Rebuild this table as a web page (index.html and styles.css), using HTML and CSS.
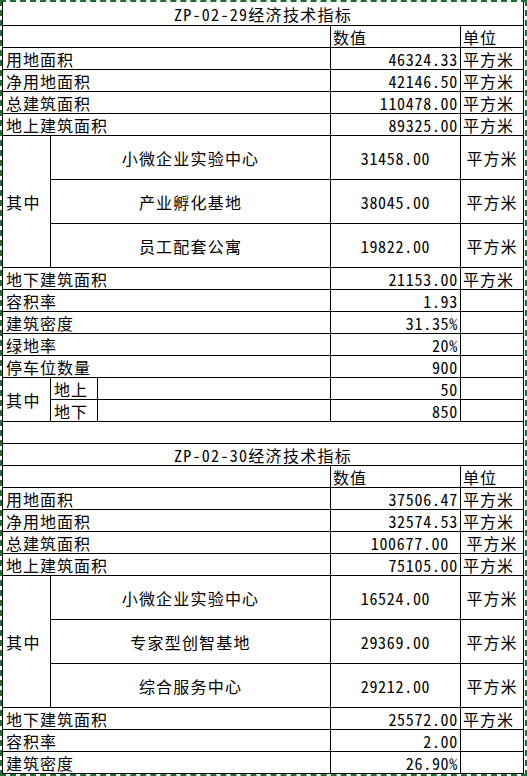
FILE: index.html
```html
<!DOCTYPE html>
<html lang="zh-CN">
<head>
<meta charset="utf-8">
<title>经济技术指标</title>
<link rel="stylesheet" href="styles.css">
</head>
<body>
<div class="sheet">
  <div class="grid">
    <div class="c title">ZP-02-29经济技术指标</div>
    <div class="c span3"></div><div class="c unit">数值</div><div class="c unit">单位</div>
    <div class="c label">用地面积</div><div class="c num">46324.33</div><div class="c unit">平方米</div>
    <div class="c label">净用地面积</div><div class="c num">42146.50</div><div class="c unit">平方米</div>
    <div class="c label">总建筑面积</div><div class="c num">110478.00</div><div class="c unit">平方米</div>
    <div class="c label">地上建筑面积</div><div class="c num">89325.00</div><div class="c unit">平方米</div>
    <div class="c group3">其中</div>
    <div class="c sub">小微企业实验中心</div><div class="c ctr numf">31458.00</div><div class="c ctr">平方米</div>
    <div class="c sub">产业孵化基地</div><div class="c ctr numf">38045.00</div><div class="c ctr">平方米</div>
    <div class="c sub">员工配套公寓</div><div class="c ctr numf">19822.00</div><div class="c ctr">平方米</div>
    <div class="c label">地下建筑面积</div><div class="c num">21153.00</div><div class="c unit">平方米</div>
    <div class="c label">容积率</div><div class="c num">1.93</div><div class="c"></div>
    <div class="c label">建筑密度</div><div class="c num">31.35%</div><div class="c"></div>
    <div class="c label">绿地率</div><div class="c num">20%</div><div class="c"></div>
    <div class="c label">停车位数量</div><div class="c num">900</div><div class="c"></div>
    <div class="c group2">其中</div>
    <div class="c small">地上</div><div class="c"></div><div class="c num">50</div><div class="c"></div>
    <div class="c small">地下</div><div class="c"></div><div class="c num">850</div><div class="c"></div>
    <div class="c full"></div>

    <div class="c title">ZP-02-30经济技术指标</div>
    <div class="c span3"></div><div class="c unit">数值</div><div class="c unit">单位</div>
    <div class="c label">用地面积</div><div class="c num">37506.47</div><div class="c unit">平方米</div>
    <div class="c label">净用地面积</div><div class="c num">32574.53</div><div class="c unit">平方米</div>
    <div class="c label">总建筑面积</div><div class="c num shifted">100677.00</div><div class="c ctr">平方米</div>
    <div class="c label">地上建筑面积</div><div class="c num">75105.00</div><div class="c unit">平方米</div>
    <div class="c group3">其中</div>
    <div class="c sub">小微企业实验中心</div><div class="c ctr numf">16524.00</div><div class="c ctr">平方米</div>
    <div class="c sub">专家型创智基地</div><div class="c ctr numf">29369.00</div><div class="c ctr">平方米</div>
    <div class="c sub">综合服务中心</div><div class="c ctr numf">29212.00</div><div class="c ctr">平方米</div>
    <div class="c label">地下建筑面积</div><div class="c num">25572.00</div><div class="c unit">平方米</div>
    <div class="c label">容积率</div><div class="c num">2.00</div><div class="c"></div>
    <div class="c label">建筑密度</div><div class="c num">26.90%</div><div class="c"></div>
  </div>
</div>
</body>
</html>
```

FILE: styles.css
```css
html, body {
  margin: 0;
  padding: 0;
  background: #fff;
}

body {
  font-family: "Noto Sans Mono CJK SC", "Noto Sans CJK SC", "DejaVu Sans Mono", monospace;
  font-size: 16px;
  color: #000;
}

.sheet {
  width: 527px;
  height: 776px;
  box-sizing: border-box;
  border: 2px dashed #1e6e30;
  background: #fff;
}

.grid {
  display: grid;
  width: fit-content;
  grid-template-columns: 47px 46px 232px 129px 62px;
  grid-template-rows:
    23px repeat(5, 21px) repeat(3, 43px)
    repeat(14, 21px) repeat(3, 43px) repeat(3, 21px);
  gap: 1px;
  padding: 0 1px 1px 1px;
  background: #000;
}

.c {
  background: #fff;
  display: flex;
  align-items: center;
  white-space: nowrap;
  letter-spacing: 1px;
  line-height: 17px;
  padding-top: 1px;
  box-sizing: border-box;
  min-width: 0;
}

.title {
  grid-column: span 5;
  justify-content: center;
  letter-spacing: 1.3px;
}

.span3 {
  grid-column: span 3;
}

.full {
  grid-column: span 5;
}

.label {
  grid-column: span 3;
  padding-left: 3px;
}

.num {
  justify-content: flex-end;
  padding-right: 2px;
  letter-spacing: 0.7px;
}

.num.shifted {
  padding-right: 11px;
}

.unit {
  padding-left: 2px;
}

.ctr {
  justify-content: center;
}

.numf {
  letter-spacing: 0.7px;
}

.sub {
  grid-column: span 2;
  justify-content: center;
  letter-spacing: 1.2px;
}

.small {
  padding-left: 3px;
}

.group3 {
  grid-row: span 3;
  padding-left: 3px;
  letter-spacing: 1.5px;
}

.group2 {
  grid-row: span 2;
  padding-left: 3px;
  letter-spacing: 1.5px;
}
```
